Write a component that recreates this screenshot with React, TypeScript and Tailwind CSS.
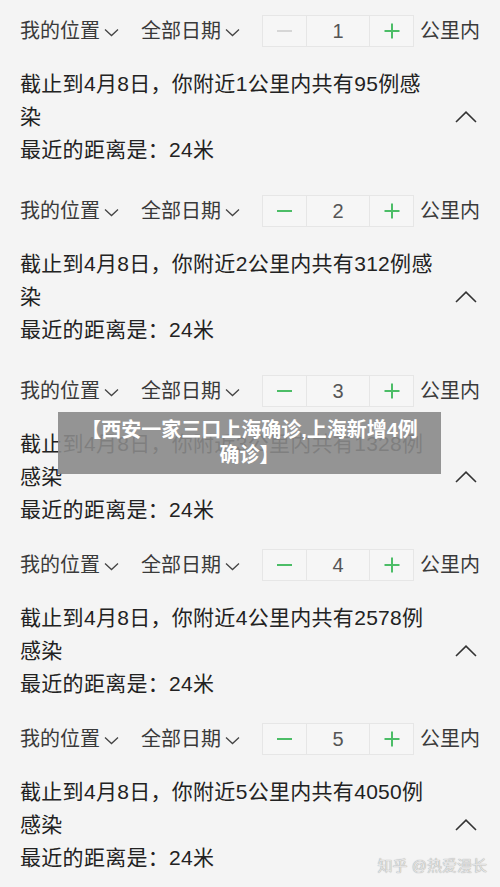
type Row = {
  km: number;
  count: number;
  gapBottom: string;
};

const rows: Row[] = [
  { km: 1, count: 95, gapBottom: "pb-[14px]" },
  { km: 2, count: 312, gapBottom: "pb-[14px]" },
  { km: 3, count: 1328, gapBottom: "pb-[8px]" },
  { km: 4, count: 2578, gapBottom: "pb-[8px]" },
  { km: 5, count: 4050, gapBottom: "pb-[8px]" },
];

function SmallChevron() {
  return (
    <svg width="15" height="9" viewBox="0 0 15 9" className="ml-[4px] mt-[2px] shrink-0">
      <path d="M1 1.5 L7.5 7.5 L14 1.5" fill="none" stroke="#444" strokeWidth="1.3" />
    </svg>
  );
}

function Stepper({ value }: { value: number }) {
  const disabled = value <= 1;
  return (
    <div className="flex h-[32px] shrink-0 border border-[#e6e6e6] bg-[#f6f6f6]">
      <div className="flex w-[44px] items-center justify-center border-r border-[#e6e6e6]">
        <span
          className={
            disabled
              ? "block h-[2px] w-[15px] bg-[#d6d6d6]"
              : "block h-[2px] w-[15px] bg-[#4cbd67]"
          }
        />
      </div>
      <div className="flex w-[62px] items-center justify-center text-[20px] text-[#555]">
        {value}
      </div>
      <div className="flex w-[44px] items-center justify-center border-l border-[#e6e6e6]">
        <svg width="16" height="16" viewBox="0 0 16 16">
          <path d="M8 0.5 V15.5 M0.5 8 H15.5" stroke="#4cbd67" strokeWidth="2" />
        </svg>
      </div>
    </div>
  );
}

function Section({ row }: { row: Row }) {
  return (
    <div className={`px-[20px] pt-[15px] ${row.gapBottom}`}>
      <div className="flex h-[32px] items-center whitespace-nowrap text-[20px] text-[#3a3a3a]">
        <div className="flex shrink-0 items-center">
          我的位置
          <SmallChevron />
        </div>
        <div className="ml-[22px] flex shrink-0 items-center">
          全部日期
          <SmallChevron />
        </div>
        <div className="ml-[22px] shrink-0">
          <Stepper value={row.km} />
        </div>
        <div className="ml-[6px] shrink-0">公里内</div>
      </div>

      <div className="mt-[20px] flex items-center">
        <div className="w-[416px] text-[21px] leading-[33px] tracking-[0.3px] text-[#222]">
          <p>
            截止到4月8日，你附近{row.km}公里内共有{row.count}例感染
          </p>
          <p>最近的距离是：24米</p>
        </div>
        <svg width="22" height="12" viewBox="0 0 22 12" className="ml-auto mr-[3px]">
          <path d="M1 11 L11 1.2 L21 11" fill="none" stroke="#333" strokeWidth="1.6" />
        </svg>
      </div>
    </div>
  );
}

export default function App() {
  return (
    <div
      className="relative min-h-[887px] w-full overflow-hidden bg-[#f4f4f4]"
      style={{ fontFamily: '"Liberation Sans", "Noto Sans CJK SC", sans-serif' }}
    >
      {rows.map((row) => (
        <Section key={row.km} row={row} />
      ))}

      <div className="absolute left-[58px] top-[412px] flex h-[62px] w-[383px] items-center justify-center bg-[rgba(138,138,138,0.9)] px-[16px] text-center text-[20px] font-bold leading-[25px] text-white">
        【西安一家三口上海确诊,上海新增4例确诊】
      </div>

      <div className="absolute bottom-[10px] right-[13px] text-[15px] text-[#e4e4e4] [text-shadow:0_0_1px_rgba(0,0,0,0.45)]">
        知乎 @热爱漫长
      </div>
    </div>
  );
}
